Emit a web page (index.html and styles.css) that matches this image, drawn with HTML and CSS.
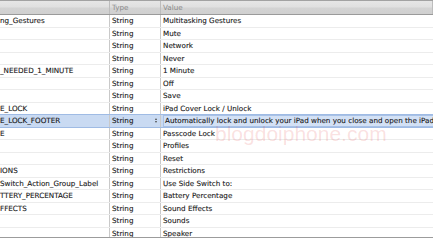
FILE: index.html
```html
<!DOCTYPE html>
<html lang="en">
<head>
    <meta charset="UTF-8">
    <title>Localizable Strings</title>
    <link rel="stylesheet" href="styles.css">
</head>
<body>
    <div class="strings-table">
        <div class="table-head">
            <div class="cell key-cell"></div>
            <div class="cell type-cell">Type</div>
            <div class="cell value-cell">Value</div>
        </div>

        <div class="row"><div class="cell key-cell">ng_Gestures</div><div class="cell type-cell">String</div><div class="cell value-cell">Multitasking Gestures</div></div>
        <div class="row"><div class="cell key-cell"></div><div class="cell type-cell">String</div><div class="cell value-cell">Mute</div></div>
        <div class="row"><div class="cell key-cell"></div><div class="cell type-cell">String</div><div class="cell value-cell">Network</div></div>
        <div class="row"><div class="cell key-cell"></div><div class="cell type-cell">String</div><div class="cell value-cell">Never</div></div>
        <div class="row"><div class="cell key-cell">_NEEDED_1_MINUTE</div><div class="cell type-cell">String</div><div class="cell value-cell">1 Minute</div></div>
        <div class="row"><div class="cell key-cell"></div><div class="cell type-cell">String</div><div class="cell value-cell">Off</div></div>
        <div class="row"><div class="cell key-cell"></div><div class="cell type-cell">String</div><div class="cell value-cell">Save</div></div>
        <div class="row"><div class="cell key-cell">E_LOCK</div><div class="cell type-cell">String</div><div class="cell value-cell">iPad Cover Lock / Unlock</div></div>
        <div class="row selected">
            <div class="cell key-cell">E_LOCK_FOOTER</div>
            <div class="cell type-cell">String<span class="stepper"><i class="up"></i><i class="down"></i></span></div>
            <div class="cell value-cell"><span class="edit-field">Automatically lock and unlock your iPad when you close and open the iPad cover.</span></div>
        </div>
        <div class="row"><div class="cell key-cell">E</div><div class="cell type-cell">String</div><div class="cell value-cell">Passcode Lock</div></div>
        <div class="row"><div class="cell key-cell"></div><div class="cell type-cell">String</div><div class="cell value-cell">Profiles</div></div>
        <div class="row"><div class="cell key-cell"></div><div class="cell type-cell">String</div><div class="cell value-cell">Reset</div></div>
        <div class="row"><div class="cell key-cell">IONS</div><div class="cell type-cell">String</div><div class="cell value-cell">Restrictions</div></div>
        <div class="row"><div class="cell key-cell">Switch_Action_Group_Label</div><div class="cell type-cell">String</div><div class="cell value-cell">Use Side Switch to:</div></div>
        <div class="row"><div class="cell key-cell">TTERY_PERCENTAGE</div><div class="cell type-cell">String</div><div class="cell value-cell">Battery Percentage</div></div>
        <div class="row"><div class="cell key-cell">FFECTS</div><div class="cell type-cell">String</div><div class="cell value-cell">Sound Effects</div></div>
        <div class="row"><div class="cell key-cell"></div><div class="cell type-cell">String</div><div class="cell value-cell">Sounds</div></div>
        <div class="row"><div class="cell key-cell"></div><div class="cell type-cell">String</div><div class="cell value-cell">Speaker</div></div>

        <!-- watermark over the table -->
        <div class="watermark">blogdoiphone.com</div>
    </div>
</body>
</html>
```

FILE: styles.css
```css
:root {
    --grid-line: #c9c9c9;
    --row-line: #ececec;
    --text-dark: #151515;
    --select-bg: #c9daf2;
    --select-line: #9fbbe4;
}

html, body {
    margin: 0;
    background: #ffffff;
}

body {
    font-family: 'DejaVu Sans', sans-serif;
    font-size: 7.2px;
    color: var(--text-dark);
    -webkit-text-stroke: 0.1px var(--text-dark);
    width: 433px;
    height: 240px;
    overflow: hidden;
}

.strings-table {
    position: relative;
    height: 237px;
    overflow: hidden;
    border-bottom: 1px solid #9c9c9c;
}

.table-head,
.row {
    display: grid;
    grid-template-columns: 110px 51px 1fr;
}

.table-head {
    height: 13px;
    border-top: 1px solid #a2a2a2;
    border-bottom: 1px solid #9a9a9a;
    background: linear-gradient(to bottom, #e6e6e6 0%, #e0e0e0 45%, #d3d3d3 55%, #d0d0d0 100%);
    color: #8a8a8a;
    -webkit-text-stroke: 0;
}

.table-head .cell {
    line-height: 13px;
    border-right: 1px solid #bdbdbd;
}

.row {
    height: 12.5px;
    box-sizing: border-box;
    border-bottom: 1px solid var(--row-line);
}

.cell {
    display: flex;
    align-items: center;
    white-space: nowrap;
    overflow: hidden;
    border-right: 1px solid var(--grid-line);
}

.type-cell,
.value-cell {
    padding-left: 2px;
}

.value-cell {
    border-right: none;
}

.row.selected {
    background: var(--select-bg);
    border-top: 1px solid var(--select-line);
    border-bottom: 1px solid var(--select-line);
    margin-top: -1px;
    height: 13.5px;
}

.stepper {
    margin-left: auto;
    margin-right: 3px;
    display: flex;
    flex-direction: column;
    gap: 1px;
}

.stepper i {
    display: block;
    width: 0;
    height: 0;
    border-left: 1.5px solid transparent;
    border-right: 1.5px solid transparent;
}

.stepper .up {
    border-bottom: 2px solid #4a4a4a;
}

.stepper .down {
    border-top: 2px solid #4a4a4a;
}

.edit-field {
    display: block;
    line-height: 10px;
    padding-left: 1px;
    background: #d3e1f5;
    border: 1px solid #a8c1e6;
    border-right: none;
}

.watermark {
    position: absolute;
    left: 215px;
    top: 122px;
    font-family: 'Liberation Sans', sans-serif;
    font-size: 21px;
    color: rgba(225, 70, 70, 0.17);
    -webkit-text-stroke: 0;
    pointer-events: none;
}
```
